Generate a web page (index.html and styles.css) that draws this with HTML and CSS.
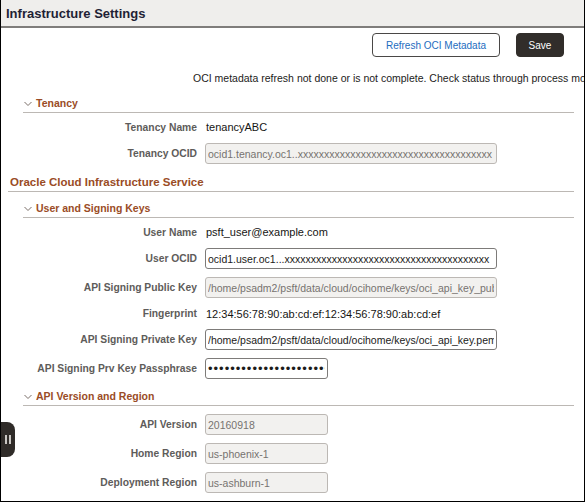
FILE: index.html
```html
<!DOCTYPE html>
<html lang="en">
<head>
<meta charset="utf-8">
<title>Infrastructure Settings</title>
<link rel="stylesheet" href="styles.css">
</head>
<body>
<div class="frame">
  <div class="titlebar"><h1 class="title">Infrastructure Settings</h1></div>

  <div class="toolbar">
    <button class="btn btn--secondary" type="button">Refresh OCI Metadata</button>
    <button class="btn btn--primary" type="button">Save</button>
  </div>

  <p class="notice">OCI metadata refresh not done or is not complete. Check status through process monitor.</p>

  <section class="group group--tenancy">
    <h3 class="sub-head"><svg class="chev" width="8" height="6" viewBox="0 0 8 6"><polyline points="0.5,1 4,4.5 7.5,1" fill="none" stroke="#7b6f68" stroke-width="1"/></svg>Tenancy</h3>
    <div class="rows">
      <div class="row row--text"><span class="label">Tenancy Name</span><span class="value">tenancyABC</span></div>
      <div class="row"><span class="label">Tenancy OCID</span><input class="field field--long field--ro" value="ocid1.tenancy.oc1..xxxxxxxxxxxxxxxxxxxxxxxxxxxxxxxxxxxxx" readonly></div>
    </div>
  </section>

  <h2 class="main-head">Oracle Cloud Infrastructure Service</h2>

  <section class="group group--user">
    <h3 class="sub-head"><svg class="chev" width="8" height="6" viewBox="0 0 8 6"><polyline points="0.5,1 4,4.5 7.5,1" fill="none" stroke="#7b6f68" stroke-width="1"/></svg>User and Signing Keys</h3>
    <div class="rows">
      <div class="row row--text"><span class="label">User Name</span><span class="value">psft_user@example.com</span></div>
      <div class="row"><span class="label">User OCID</span><input class="field field--long" value="ocid1.user.oc1...xxxxxxxxxxxxxxxxxxxxxxxxxxxxxxxxxxxxxxx"></div>
      <div class="row"><span class="label">API Signing Public Key</span><input class="field field--long field--ro" value="/home/psadm2/psft/data/cloud/ocihome/keys/oci_api_key_public.pem" readonly></div>
      <div class="row row--text row--short"><span class="label">Fingerprint</span><span class="value">12:34:56:78:90:ab:cd:ef:12:34:56:78:90:ab:cd:ef</span></div>
      <div class="row"><span class="label">API Signing Private Key</span><input class="field field--long" value="/home/psadm2/psft/data/cloud/ocihome/keys/oci_api_key.pem"></div>
      <div class="row"><span class="label">API Signing Prv Key Passphrase</span><input class="field field--short field--secret" type="password" value="passphrasepassphrasepassphrase"></div>
    </div>
  </section>

  <section class="group group--api">
    <h3 class="sub-head"><svg class="chev" width="8" height="6" viewBox="0 0 8 6"><polyline points="0.5,1 4,4.5 7.5,1" fill="none" stroke="#7b6f68" stroke-width="1"/></svg>API Version and Region</h3>
    <div class="rows rows--inputs">
      <div class="row"><span class="label">API Version</span><input class="field field--short field--ro" value="20160918" readonly></div>
      <div class="row"><span class="label">Home Region</span><input class="field field--short field--ro" value="us-phoenix-1" readonly></div>
      <div class="row"><span class="label">Deployment Region</span><input class="field field--short field--ro" value="us-ashburn-1" readonly></div>
    </div>
  </section>

  <div class="side-tab"><span class="side-tab__bar"></span><span class="side-tab__bar"></span></div>
</div>
</body>
</html>
```

FILE: styles.css
```css
* { box-sizing: border-box; }

html, body {
  margin: 0;
  padding: 0;
  background: #ffffff;
}

body {
  font-family: "Liberation Sans", Arial, sans-serif;
  color: #161513;
}

.frame {
  position: relative;
  width: 585px;
  height: 502px;
  border: 1px solid #000;
  border-top: none;
  overflow: hidden;
  background: #fff;
}

.titlebar {
  height: 28px;
  background: #efeeec;
  border-bottom: 2px solid #7f7d7b;
  display: flex;
  align-items: center;
  padding-left: 5px;
}

.title {
  margin: 0;
  font-size: 13px;
  font-weight: bold;
  color: #1f1f35;
  line-height: 16px;
  padding-top: 1px;
}

.toolbar {
  display: flex;
  justify-content: flex-end;
  gap: 16px;
  margin-top: 5px;
  padding-right: 20px;
}

.btn {
  height: 24px;
  font-family: "Liberation Sans", Arial, sans-serif;
  font-size: 10px;
  border-radius: 4px;
  padding: 0;
  margin: 0;
  cursor: pointer;
}

.btn--secondary {
  width: 128px;
  background: #fff;
  border: 1px solid #4a4846;
  color: #1d6cc0;
}

.btn--primary {
  width: 48px;
  background: #312d2a;
  border: 1px solid #312d2a;
  color: #fff;
}

.notice {
  margin: 14px 0 0;
  padding-left: 192px;
  font-size: 10.5px;
  line-height: 14px;
  white-space: nowrap;
  color: #1c1b1a;
}

.group--tenancy { margin-top: 11px; }
.group--user { margin-top: 9px; }
.group--api { margin-top: 10px; }

.sub-head {
  margin: 0 10px 0 22px;
  height: 17px;
  padding-bottom: 1px;
  border-bottom: 1px solid #bcb8b4;
  display: flex;
  align-items: center;
  gap: 4px;
  font-size: 10.5px;
  line-height: 15px;
  font-weight: bold;
  color: #9a4c26;
}

.chev {
  flex: none;
  margin-left: 1px;
  margin-top: 1px;
}

.main-head {
  margin: 11px 10px 0 7px;
  height: 17px;
  padding: 0 0 1px 2px;
  border-bottom: 1px solid #bcb8b4;
  font-size: 11.5px;
  line-height: 15px;
  font-weight: bold;
  color: #9a4c26;
}

.rows {
  display: flex;
  flex-direction: column;
  gap: 8px;
  padding-top: 6px;
}

.rows--inputs { padding-top: 8px; }

.row {
  display: grid;
  grid-template-columns: 196px 1fr;
  column-gap: 8px;
  align-items: center;
  height: 21px;
}

.row--text { height: 16px; }
.row--short { height: 15px; }

.label {
  text-align: right;
  font-size: 10.3px;
  font-weight: bold;
  color: #5e5c5a;
  white-space: nowrap;
}

.value {
  font-size: 11px;
  color: #161513;
  padding-left: 1px;
  white-space: nowrap;
}

.field {
  height: 21px;
  margin: 0;
  padding: 0 2px;
  font-family: "Liberation Sans", Arial, sans-serif;
  font-size: 10.5px;
  color: #1c1b1a;
  background: #fff;
  border: 1px solid #7d7b79;
  border-radius: 3px;
  outline: none;
}

.field--long { width: 292px; }
.field--short { width: 123px; }

.field--ro {
  background: #f2f1ef;
  border-color: #bcb8b4;
  color: #77736f;
}

.field--secret {
  font-size: 13px;
  letter-spacing: 1px;
  padding-left: 2px;
}

.side-tab {
  position: absolute;
  left: -1px;
  top: 422px;
  width: 15px;
  height: 35px;
  background: #2f2b28;
  border-radius: 0 8px 8px 0;
  display: flex;
  justify-content: center;
  align-items: center;
  gap: 2px;
}

.side-tab__bar {
  width: 2px;
  height: 9px;
  background: #c9c6c2;
}
```
